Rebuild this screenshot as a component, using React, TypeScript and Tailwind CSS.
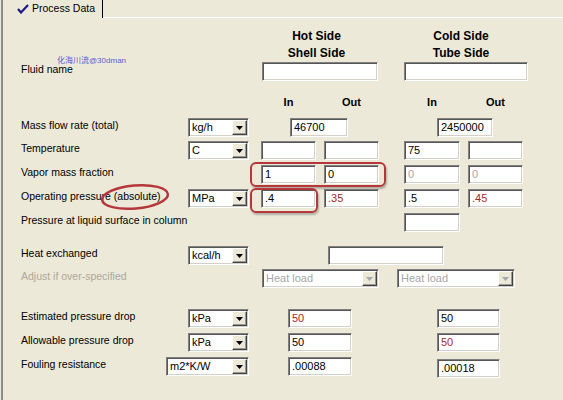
import type { ReactNode } from "react";

const sunken =
  "border border-t-[#808080] border-l-[#808080] border-r-white border-b-white shadow-[inset_1px_1px_0_#555555,inset_-1px_-1px_0_#d4d0c8]";

type BoxProps = { className?: string; value?: string; tone?: string };

function Box({ className = "", value = "", tone = "text-black" }: BoxProps) {
  return (
    <div className={`h-[19px] shrink-0 bg-white pl-[3px] text-[11px] leading-[17px] ${sunken} ${tone} ${className}`}>
      {value}
    </div>
  );
}

type ComboProps = { className?: string; value: string; disabled?: boolean };

function Combo({ className = "", value, disabled }: ComboProps) {
  return (
    <div className={`flex h-[19px] shrink-0 items-center justify-between bg-white pl-[3px] pr-[1px] ${sunken} ${className}`}>
      <span className={`text-[11px] leading-[17px] ${disabled ? "text-[#a6a6a6]" : "text-black"}`}>{value}</span>
      <span className="flex h-[15px] w-[15px] items-center justify-center border border-t-white border-l-white border-r-[#404040] border-b-[#404040] bg-[#ece9d8] shadow-[inset_-1px_-1px_0_#9a9a9a]">
        <svg width="7" height="4" viewBox="0 0 7 4">
          <path d="M0 0h7L3.5 4z" fill={disabled ? "#a6a6a6" : "#000"} />
        </svg>
      </span>
    </div>
  );
}

type RowProps = { label: string; unit?: ReactNode; className?: string; muted?: boolean; children?: ReactNode };

function Row({ label, unit, className = "", muted, children }: RowProps) {
  return (
    <div className={`flex items-start ${className}`}>
      <div className={`w-[145px] shrink-0 whitespace-nowrap text-[10.5px] leading-[14px] ${muted ? "text-[#aca899]" : "text-black"}`}>
        {label}
      </div>
      <div className="flex w-[83px] shrink-0 justify-end">{unit}</div>
      {children}
    </div>
  );
}

const red = "text-[#a52a2a]";
const grey = "text-[#a6a6a6]";

export default function App() {
  return (
    <div className="relative h-[400px] w-[563px] overflow-hidden bg-[#ece9d8] pl-[1px] font-['Liberation_Sans',Arial,sans-serif] text-black">
      <div className="h-full border-l-2 border-l-[#8c8c8c]">
        {/* tab strip */}
        <div className="flex h-[18px]">
          <div className="flex w-[100px] items-center gap-[3px] border-r border-r-black pl-[14px] text-[10.5px]">
            <svg width="12" height="10" viewBox="0 0 12 10">
              <path d="M1 5l3 3.5L11 1" fill="none" stroke="#1b1b8a" strokeWidth="2.2" />
            </svg>
            Process Data
          </div>
          <div className="flex-1 border-b border-b-white" />
        </div>

        <div className="pl-[18px]">
          {/* column headers */}
          <div className="mt-[10px] flex pl-[228px] text-[12px] font-bold leading-[17px]">
            <div className="ml-[13px] w-[109px] text-center">
              Hot Side
              <br />
              Shell Side
            </div>
            <div className="ml-[33px] w-[114px] text-center">
              Cold Side
              <br />
              Tube Side
            </div>
          </div>

          <Row label="Fluid name">
            <Box className="ml-[13px] w-[116px]" />
            <Box className="ml-[26px] w-[124px]" />
          </Row>

          <div className="mt-[14px] flex pl-[228px] text-[11px] font-bold leading-[14px]">
            <div className="ml-[12px] w-[55px] text-center">In</div>
            <div className="ml-[8px] w-[55px] text-center">Out</div>
            <div className="ml-[25px] w-[56px] text-center">In</div>
            <div className="ml-[8px] w-[55px] text-center">Out</div>
          </div>

          <Row label="Mass flow rate (total)" className="mt-[9px]" unit={<Combo className="w-[61px]" value="kg/h" />}>
            <Box className="ml-[41px] w-[58px]" value="46700" />
            <Box className="ml-[89px] w-[56px]" value="2450000" />
          </Row>

          <Row label="Temperature" className="mt-[4px]" unit={<Combo className="w-[61px]" value="C" />}>
            <Box className="ml-[12px] w-[55px]" />
            <Box className="ml-[8px] w-[55px]" />
            <Box className="ml-[25px] w-[56px]" value="75" />
            <Box className="ml-[8px] w-[55px]" />
          </Row>

          <Row label="Vapor mass fraction" className="mt-[5px]">
            <Box className="ml-[12px] w-[55px]" value="1" />
            <Box className="ml-[8px] w-[55px]" value="0" />
            <Box className="ml-[25px] w-[56px]" value="0" tone={grey} />
            <Box className="ml-[8px] w-[55px]" value="0" tone={grey} />
          </Row>

          <Row label="Operating pressure (absolute)" className="mt-[5px]" unit={<Combo className="w-[61px]" value="MPa" />}>
            <Box className="ml-[12px] w-[55px]" value=".4" />
            <Box className="ml-[8px] w-[55px]" value=".35" tone={red} />
            <Box className="ml-[25px] w-[56px]" value=".5" />
            <Box className="ml-[8px] w-[55px]" value=".45" tone={red} />
          </Row>

          <Row label="Pressure at liquid surface in column" className="mt-[5px]">
            <Box className="ml-[155px] w-[56px]" />
          </Row>

          <Row label="Heat exchanged" className="mt-[14px]" unit={<Combo className="w-[61px]" value="kcal/h" />}>
            <Box className="ml-[79px] w-[116px]" />
          </Row>

          <Row label="Adjust if over-specified" className="mt-[4px]" muted>
            <Combo className="ml-[13px] w-[117px]" value="Heat load" disabled />
            <Combo className="ml-[18px] w-[118px]" value="Heat load" disabled />
          </Row>

          <Row label="Estimated pressure drop" className="mt-[21px]" unit={<Combo className="w-[61px]" value="kPa" />}>
            <Box className="ml-[39px] w-[64px]" value="50" tone={red} />
            <Box className="ml-[85px] w-[63px]" value="50" />
          </Row>

          <Row label="Allowable pressure drop" className="mt-[5px]" unit={<Combo className="w-[61px]" value="kPa" />}>
            <Box className="ml-[39px] w-[64px]" value="50" />
            <Box className="ml-[85px] w-[63px]" value="50" tone={red} />
          </Row>

          <Row label="Fouling resistance" className="mt-[5px]" unit={<Combo className="w-[83px]" value="m2*K/W" />}>
            <Box className="ml-[39px] w-[64px]" value=".00088" />
            <Box className="ml-[85px] mt-[2px] w-[63px]" value=".00018" />
          </Row>
        </div>
      </div>

      {/* watermark */}
      <div className="absolute left-[57px] top-[56px] font-['Liberation_Sans','Noto_Sans_CJK_SC',sans-serif] text-[8px] leading-[10px] text-[#5c5cd6]">
        化海川流@30dman
      </div>

      {/* red annotations */}
      <div className="absolute left-[250px] top-[162px] h-[25px] w-[136px] rounded-[6px] border-2 border-[#b5373b] shadow-[1px_2px_2px_rgba(0,0,0,0.25)]" />
      <div className="absolute left-[250px] top-[188px] h-[25px] w-[68px] rounded-[6px] border-2 border-[#b5373b] shadow-[1px_2px_2px_rgba(0,0,0,0.25)]" />
      <svg className="absolute left-[98px] top-[182px]" width="74" height="30" viewBox="0 0 74 30">
        <ellipse cx="37" cy="15" rx="33" ry="11.5" fill="none" stroke="#b5373b" strokeWidth="2.5" transform="rotate(-5 37 15)" />
      </svg>
    </div>
  );
}
